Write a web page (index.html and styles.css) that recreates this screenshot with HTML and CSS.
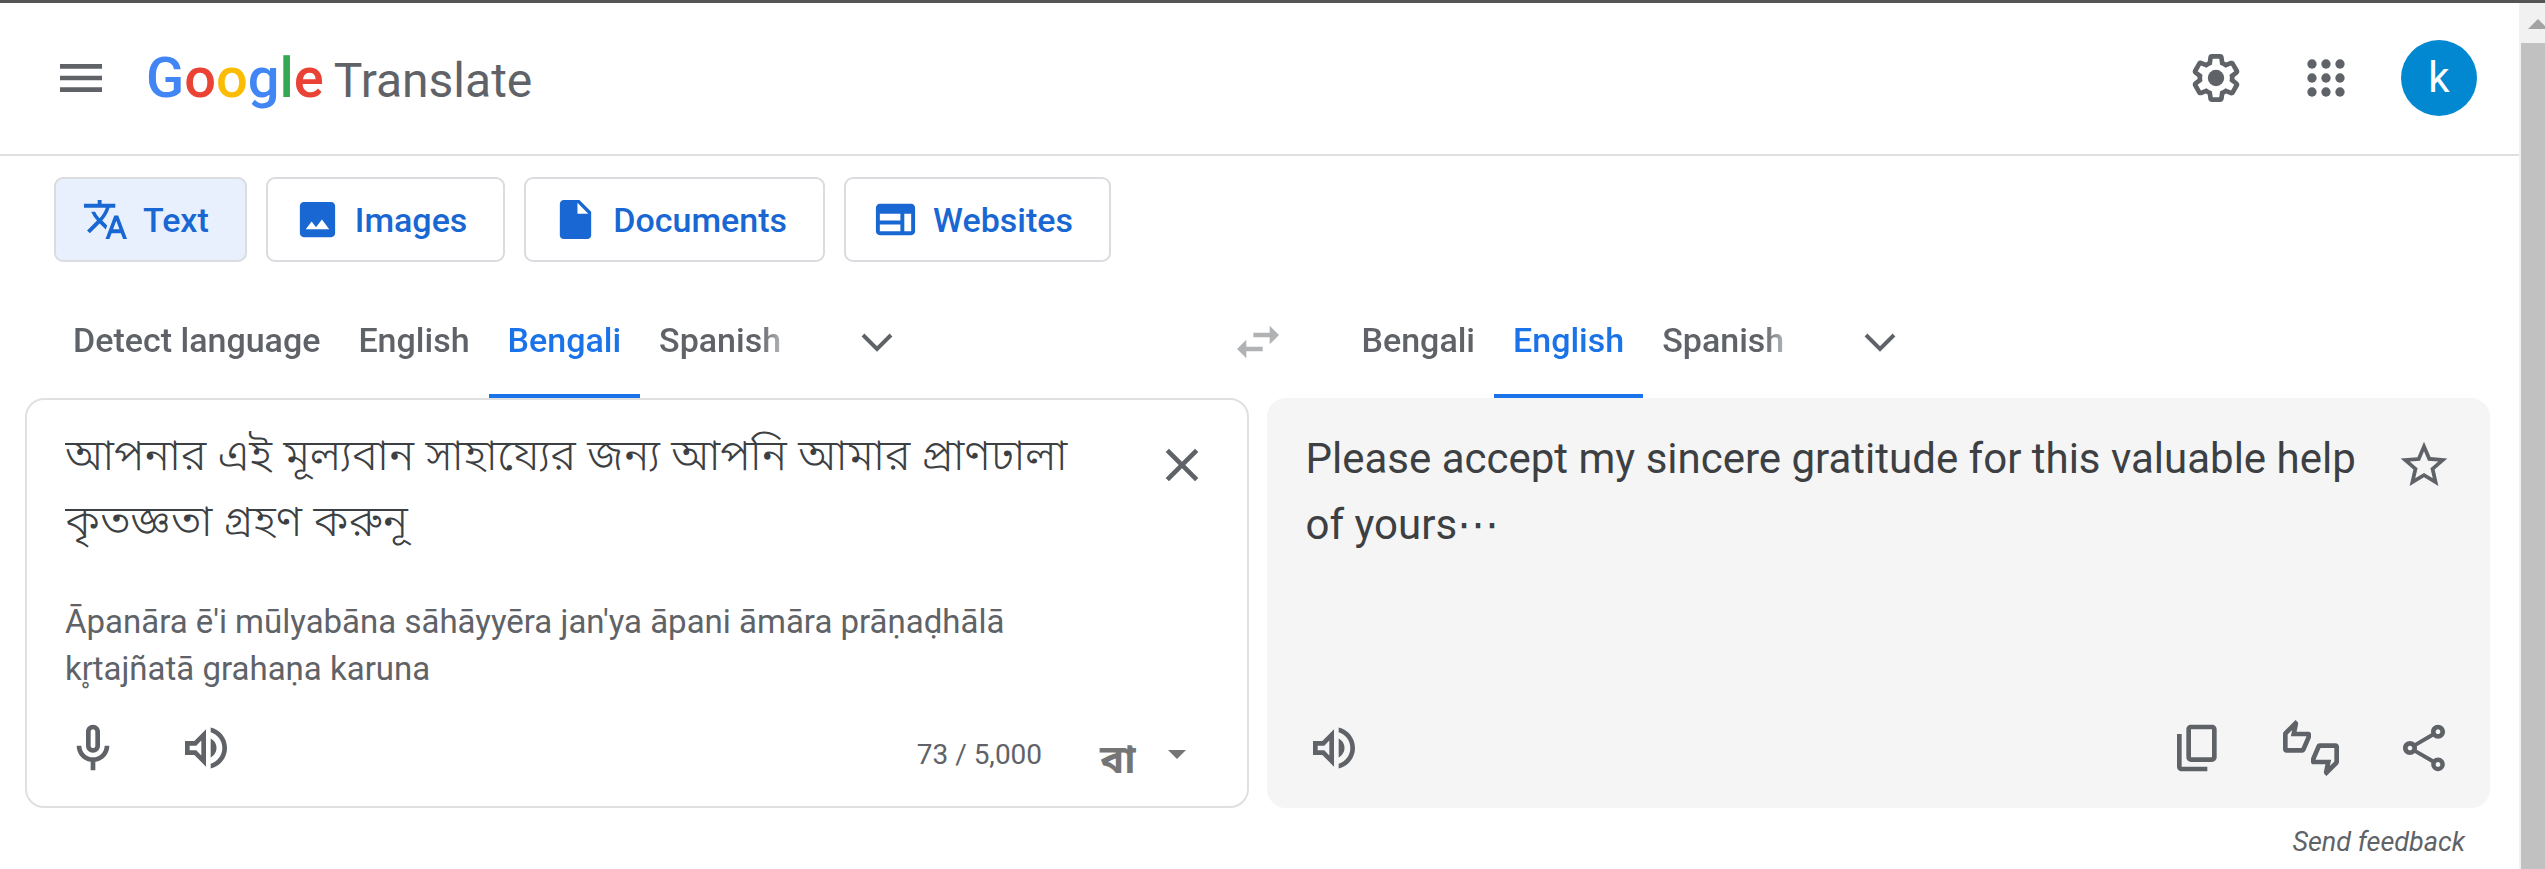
FILE: index.html
```html
<!DOCTYPE html>
<html lang="en">
<head>
  <meta charset="UTF-8">
  <title>Google Translate</title>
  <link rel="stylesheet" href="styles.css">
</head>
<body>
  <div class="page">
    <header class="header">
      <button class="icon-btn" aria-label="Main menu">
        <svg class="icon" viewBox="0 0 24 24"><path d="M3 18h18v-2H3v2zm0-5h18v-2H3v2zm0-7v2h18V6H3z"/></svg>
      </button>
      <a class="logo" href="#">
        <span class="google"><span class="blue">G</span><span class="red">o</span><span class="yellow">o</span><span class="blue">g</span><span class="green">l</span><span class="red">e</span></span>
        <span class="product">Translate</span>
      </a>
      <div class="header-actions">
        <button class="icon-btn" aria-label="Settings">
          <svg class="icon" viewBox="0 0 24 24"><path d="M13.85 22.25h-3.7c-.74 0-1.36-.54-1.45-1.27l-.27-1.89c-.27-.14-.53-.29-.79-.46l-1.8.72c-.7.26-1.47-.03-1.81-.65L2.2 15.53c-.35-.66-.2-1.44.36-1.88l1.53-1.19c-.01-.15-.02-.3-.02-.46 0-.15.01-.31.02-.46l-1.52-1.19c-.59-.45-.74-1.26-.37-1.88l1.85-3.19c.34-.62 1.11-.9 1.79-.63l1.81.73c.26-.17.52-.32.78-.46l.27-1.91c.09-.7.71-1.25 1.44-1.25h3.7c.74 0 1.36.54 1.45 1.27l.27 1.89c.27.14.53.29.79.46l1.8-.72c.71-.26 1.48.03 1.82.65l1.84 3.18c.36.66.2 1.44-.36 1.88l-1.52 1.19c.01.15.02.3.02.46s-.01.31-.02.46l1.52 1.19c.56.45.72 1.23.37 1.86l-1.86 3.22c-.34.62-1.11.9-1.8.63l-1.8-.72c-.26.17-.52.32-.78.46l-.27 1.91c-.1.68-.72 1.22-1.46 1.22zm-3.23-2h2.76l.37-2.55.53-.22c.44-.18.88-.44 1.34-.78l.45-.34 2.38.96 1.38-2.4-2.03-1.58.07-.56c.03-.26.06-.51.06-.78s-.03-.53-.06-.78l-.07-.56 2.03-1.58-1.39-2.4-2.39.96-.45-.35c-.42-.32-.87-.58-1.33-.77l-.52-.22-.37-2.55h-2.76l-.37 2.55-.53.21c-.44.19-.88.44-1.34.79l-.45.33-2.38-.95-1.39 2.39 2.03 1.58-.07.56a7 7 0 0 0-.06.79c0 .26.02.53.06.78l.07.56-2.03 1.58 1.38 2.4 2.39-.96.45.35c.43.33.86.58 1.33.77l.53.22.38 2.55z"/><circle cx="12" cy="12" r="3.5"/></svg>
        </button>
        <button class="icon-btn" aria-label="Google apps">
          <svg class="icon" viewBox="0 0 24 24"><circle cx="6" cy="6" r="2"/><circle cx="12" cy="6" r="2"/><circle cx="18" cy="6" r="2"/><circle cx="6" cy="12" r="2"/><circle cx="12" cy="12" r="2"/><circle cx="18" cy="12" r="2"/><circle cx="6" cy="18" r="2"/><circle cx="12" cy="18" r="2"/><circle cx="18" cy="18" r="2"/></svg>
        </button>
        <button class="avatar" aria-label="Google Account">k</button>
      </div>
    </header>

    <main class="main">
      <nav class="modes">
        <button class="mode active">
          <svg class="mode-icon" viewBox="0 0 24 24"><path d="M12.87 15.07l-2.54-2.51.03-.03c1.74-1.94 2.98-4.17 3.71-6.53H17V4h-7V2H8v2H1v1.99h11.17C11.5 7.92 10.44 9.75 9 11.35 8.07 10.32 7.3 9.19 6.69 8h-2c.73 1.63 1.73 3.17 2.98 4.56l-5.09 5.02L4 19l5-5 3.11 3.11.76-2.04zM18.5 10h-2L12 22h2l1.12-3h4.75L21 22h2l-4.5-12zm-2.62 7l1.62-4.33L19.12 17h-3.24z"/></svg>
          Text
        </button>
        <button class="mode">
          <svg class="mode-icon" viewBox="0 0 24 24"><path fill-rule="evenodd" d="M5 3h14c1.1 0 2 .9 2 2v14c0 1.1-.9 2-2 2H5c-1.1 0-2-.9-2-2V5c0-1.1.9-2 2-2zM6 17h12l-3.75-5-3 4L9 13z"/></svg>
          Images
        </button>
        <button class="mode">
          <svg class="mode-icon" viewBox="0 0 24 24"><path d="M6 2c-1.1 0-1.99.9-1.99 2L4 20c0 1.1.89 2 1.99 2H18c1.1 0 2-.9 2-2V8l-6-6H6zm7 7V3.5L18.5 9H13z"/></svg>
          Documents
        </button>
        <button class="mode">
          <svg class="mode-icon" viewBox="0 0 24 24"><path fill-rule="evenodd" d="M4 4h16c1.1 0 2 .9 2 2v12c0 1.1-.9 2-2 2H4c-1.1 0-2-.9-2-2V6c0-1.1.9-2 2-2zM4 9v3.5h10.5V9zM4 14.5V18h10.5v-3.5zM16.5 9v9H20V9z"/></svg>
          Websites
        </button>
      </nav>

      <div class="languages">
        <div class="language-side">
          <div class="tabs" role="tablist">
            <button class="tab" role="tab">Detect language</button>
            <button class="tab" role="tab">English</button>
            <button class="tab active" role="tab" aria-selected="true">Bengali</button>
            <button class="tab" role="tab">Spanish</button>
          </div>
          <button class="icon-btn" aria-label="More source languages">
            <svg class="icon" viewBox="0 0 24 24"><path class="stroke" d="M6 9l6 6 6-6"/></svg>
          </button>
        </div>
        <button class="icon-btn swap" aria-label="Swap languages">
          <svg class="icon" viewBox="0 0 24 24"><path d="M6.99 11L3 15l3.99 4v-3H14v-2H6.99v-3zM21 9l-3.99-4v3H10v2h7.01v3L21 9z"/></svg>
        </button>
        <div class="language-side">
          <div class="tabs" role="tablist">
            <button class="tab" role="tab">Bengali</button>
            <button class="tab active" role="tab" aria-selected="true">English</button>
            <button class="tab" role="tab">Spanish</button>
          </div>
          <button class="icon-btn" aria-label="More target languages">
            <svg class="icon" viewBox="0 0 24 24"><path class="stroke" d="M6 9l6 6 6-6"/></svg>
          </button>
        </div>
      </div>

      <div class="panels">
        <section class="panel source">
          <div class="panel-body">
            <div class="panel-text">
              <textarea class="source-text" lang="bn" rows="2" aria-label="Source text" spellcheck="false">আপনার এই মূল্যবান সাহায্যের জন্য আপনি আমার প্রাণঢালা কৃতজ্ঞতা গ্রহণ করুনূ</textarea>
              <p class="romanized">Āpanāra ē'i mūlyabāna sāhāyyēra jan'ya āpani āmāra prāṇaḍhālā kr̥tajñatā grahaṇa karuna</p>
            </div>
            <button class="icon-btn" aria-label="Clear source text">
              <svg class="icon" viewBox="0 0 24 24"><path d="M19 6.41L17.59 5 12 10.59 6.41 5 5 6.41 10.59 12 5 17.59 6.41 19 12 13.41 17.59 19 19 17.59 13.41 12z"/></svg>
            </button>
          </div>
          <div class="panel-footer">
            <button class="icon-btn" aria-label="Translate by voice">
              <svg class="icon" viewBox="0 0 24 24"><path d="M12 14c1.66 0 3-1.34 3-3V5c0-1.66-1.34-3-3-3S9 3.34 9 5v6c0 1.66 1.34 3 3 3zm-1-9c0-.55.45-1 1-1s1 .45 1 1v6c0 .55-.45 1-1 1s-1-.45-1-1V5zm6 6c0 2.76-2.24 5-5 5s-5-2.24-5-5H5c0 3.53 2.61 6.43 6 6.92V21.5h2v-3.58c3.39-.49 6-3.39 6-6.92h-2z"/></svg>
            </button>
            <button class="icon-btn" aria-label="Listen to source text">
              <svg class="icon" viewBox="0 0 24 24"><path d="M3 9v6h4l5 5V4L7 9H3zm7-.17v6.34L7.83 13H5v-2h2.83L10 8.83zM16.5 12A4.5 4.5 0 0 0 14 7.97v8.05c1.48-.73 2.5-2.25 2.5-4.02zM14 3.23v2.06c2.89.86 5 3.54 5 6.71s-2.11 5.85-5 6.71v2.06c4.01-.91 7-4.49 7-8.77s-2.99-7.86-7-8.77z"/></svg>
            </button>
            <div class="input-tools">
              <span class="count">73 / 5,000</span>
              <button class="keyboard" lang="bn" aria-label="Turn on input tool">বা</button>
              <button class="caret" aria-label="Select input tool">
                <svg class="caret-icon" viewBox="0 0 18 9"><path d="M0 0h18l-9 9z"/></svg>
              </button>
            </div>
          </div>
        </section>

        <section class="panel target">
          <div class="panel-body">
            <p class="target-text">Please accept my sincere gratitude for this valuable help of yours⋯</p>
            <button class="icon-btn" aria-label="Save translation">
              <svg class="icon" viewBox="0 0 24 24"><path d="M22 9.24l-7.19-.62L12 2 9.19 8.63 2 9.24l5.46 4.73L5.82 21 12 17.27 18.18 21l-1.63-7.03L22 9.24zM12 15.4l-3.76 2.27 1-4.28-3.32-2.88 4.38-.38L12 6.1l1.71 4.04 4.38.38-3.32 2.88 1 4.28L12 15.4z"/></svg>
            </button>
          </div>
          <div class="panel-footer">
            <button class="icon-btn" aria-label="Listen to translation">
              <svg class="icon" viewBox="0 0 24 24"><path d="M3 9v6h4l5 5V4L7 9H3zm7-.17v6.34L7.83 13H5v-2h2.83L10 8.83zM16.5 12A4.5 4.5 0 0 0 14 7.97v8.05c1.48-.73 2.5-2.25 2.5-4.02zM14 3.23v2.06c2.89.86 5 3.54 5 6.71s-2.11 5.85-5 6.71v2.06c4.01-.91 7-4.49 7-8.77s-2.99-7.86-7-8.77z"/></svg>
            </button>
            <div class="share-tools">
              <button class="icon-btn" aria-label="Copy translation">
                <svg class="icon" viewBox="0 0 24 24"><path d="M18 2H9c-1.1 0-2 .9-2 2v12c0 1.1.9 2 2 2h9c1.1 0 2-.9 2-2V4c0-1.1-.9-2-2-2zm0 14H9V4h9v12zM3 6h2v14h11v2H5c-1.1 0-2-.9-2-2z"/></svg>
              </button>
              <button class="icon-btn" aria-label="Rate this translation">
                <svg class="icon" viewBox="0 0 24 24"><path d="M12 6c0-.55-.45-1-1-1H5.82l.66-3.18.02-.23c0-.31-.13-.59-.33-.8L5.38 0 .44 4.94C.17 5.21 0 5.59 0 6v6.5c0 .83.67 1.5 1.5 1.5h6.75c.62 0 1.15-.38 1.38-.91l2.26-5.29c.07-.17.11-.36.11-.55V6zm-2 1.13L7.92 12H2V6.21l1.93-1.93L3.36 7H10v.13zM22.5 10h-6.75c-.62 0-1.15.38-1.38.91l-2.26 5.29c-.07.17-.11.36-.11.55V18c0 .55.45 1 1 1h5.18l-.66 3.18-.02.24c0 .31.13.59.33.8l.79.78 4.94-4.94c.27-.27.44-.65.44-1.06v-6.5c0-.83-.67-1.5-1.5-1.5zm-.5 7.79l-1.93 1.93.57-2.72H14v-.13L16.08 12H22v5.79z"/></svg>
              </button>
              <button class="icon-btn" aria-label="Share translation">
                <svg class="icon" viewBox="0 0 24 24"><path fill-rule="evenodd" d="M18 16.08c-.76 0-1.44.3-1.96.77L8.91 12.7c.05-.23.09-.46.09-.7s-.04-.47-.09-.7l7.05-4.11c.54.5 1.25.81 2.04.81 1.66 0 3-1.34 3-3s-1.34-3-3-3-3 1.34-3 3c0 .24.04.47.09.7L8.04 9.81C7.5 9.31 6.79 9 6 9c-1.66 0-3 1.34-3 3s1.34 3 3 3c.79 0 1.5-.31 2.04-.81l7.12 4.16c-.05.21-.08.43-.08.65 0 1.61 1.31 2.92 2.92 2.92s2.92-1.31 2.92-2.92-1.31-2.92-2.92-2.92zM18 4c.55 0 1 .45 1 1s-.45 1-1 1-1-.45-1-1 .45-1 1-1zM6 13c-.55 0-1-.45-1-1s.45-1 1-1 1 .45 1 1-.45 1-1 1zm12 7.02c-.55 0-1-.45-1-1s.45-1 1-1 1 .45 1 1-.45 1-1 1z"/></svg>
              </button>
            </div>
          </div>
        </section>
      </div>

      <a class="feedback" href="#">Send feedback</a>
    </main>
  </div>

  <div class="scrollbar" aria-hidden="true">
    <svg class="scroll-arrow" viewBox="0 0 26 40"><path d="M19 16l10 10H9z"/></svg>
    <div class="scroll-thumb"></div>
  </div>
</body>
</html>
```
FILE: styles.css
```css
* {
  box-sizing: border-box;
}
body {
  display: flex;
  min-height: 100vh;
  margin: 0;
  border-top: 3px solid #555;
  font-family: Roboto, "Liberation Sans", sans-serif;
  color: #3c4043;
  background-color: #fff;
}
button {
  margin: 0;
  padding: 0;
  border: 0;
  background: none;
  font-family: inherit;
  color: inherit;
  cursor: pointer;
}
a {
  text-decoration: none;
}
p {
  margin: 0;
}
.page {
  flex: 1;
  min-width: 0;
}

/* icons */
.icon-btn {
  display: flex;
  flex: none;
  align-items: center;
  justify-content: center;
  width: 113px;
  height: 112px;
}
.icon {
  width: 56px;
  height: 56px;
  fill: #5f6368;
}
.stroke {
  fill: none;
  stroke: #5f6368;
  stroke-width: 1.7;
}

/* header */
.header {
  display: flex;
  align-items: center;
  height: 153px;
  padding: 0 42px 2px 26px;
  border-bottom: 2px solid #e0e0e0;
}
.logo {
  display: flex;
  align-items: baseline;
  gap: 10px;
  margin-left: 10px;
}
.google {
  font-size: 56px;
  font-weight: 500;
}
.product {
  font-size: 48px;
  color: #5f6368;
}
.blue { color: #4285f4; }
.red { color: #ea4335; }
.yellow { color: #fbbc04; }
.green { color: #34a853; }
.header .icon-btn {
  width: 110px;
}
.header-actions {
  display: flex;
  align-items: center;
  margin-left: auto;
}
.avatar {
  width: 76px;
  height: 76px;
  margin-left: 20px;
  border-radius: 50%;
  background-color: #0288d1;
  color: #fff;
  font-size: 42px;
}

/* text / images / documents / websites */
.main {
  padding: 21px 29px 0 25px;
}
.modes {
  display: flex;
  gap: 19px;
  padding-left: 29px;
}
.mode {
  display: flex;
  align-items: center;
  gap: 14px;
  height: 85px;
  padding: 0 36px 0 26px;
  border: 2px solid #dadce0;
  border-radius: 9px;
  color: #1967d2;
  font-size: 34px;
  font-weight: 500;
}
.mode.active {
  background-color: #e8f0fe;
}
.mode-icon {
  width: 47px;
  height: 47px;
  fill: #1967d2;
}

/* language tabs */
.languages {
  display: grid;
  grid-template-columns: 1fr 112px 1fr;
  margin-top: 24px;
}
.language-side {
  display: flex;
  padding-left: 29px;
}
.tabs {
  display: flex;
  margin-right: 20px;
  -webkit-mask-image: linear-gradient(to left, transparent, #000 40px);
  mask-image: linear-gradient(to left, transparent, #000 40px);
}
.tab {
  height: 112px;
  padding: 0 19px;
  border-bottom: 4px solid transparent;
  color: #5f6368;
  font-size: 34px;
  font-weight: 500;
}
.tab.active {
  border-bottom-color: #1a73e8;
  color: #1a73e8;
}
.swap .icon {
  fill: #b0b2b4;
}

/* panels */
.panels {
  display: grid;
  grid-template-columns: 1fr 1fr;
  gap: 18px;
}
.panel {
  display: flex;
  flex-direction: column;
  padding: 9px 8px 2px 9px;
  border: 2px solid #e0e0e0;
  border-radius: 19px;
}
.target {
  border-color: #f5f5f5;
  background-color: #f5f5f5;
}
.panel-body {
  display: flex;
  flex: 1;
  justify-content: space-between;
}
.panel-text {
  flex: 1;
  padding: 17px 50px 0 29px;
}
.source-text {
  display: block;
  width: 100%;
  height: 132px;
  padding: 0;
  border: 0;
  outline: 0;
  overflow: hidden;
  resize: none;
  background: none;
  color: #3c4043;
  font-family: "Noto Sans Bengali", Roboto, sans-serif;
  font-size: 44px;
  font-weight: 300;
  line-height: 66px;
}
.romanized {
  margin-top: 40px;
  color: #5f6368;
  font-size: 33px;
  line-height: 47px;
}
.target-text {
  padding: 17px 0 0 28px;
  font-family: Roboto, "DejaVu Sans", sans-serif;
  font-size: 42px;
  line-height: 66px;
}
.panel-footer {
  display: flex;
  align-items: center;
}
.input-tools {
  display: flex;
  align-items: center;
  margin-left: auto;
  padding: 12px 53px 0 0;
}
.count {
  color: #5f6368;
  font-size: 28px;
}
.keyboard {
  margin: 0 32px 0 58px;
  padding-top: 16px;
  color: #757575;
  font-family: "Noto Sans Bengali", sans-serif;
  font-size: 40px;
  font-weight: 700;
}
.caret {
  display: flex;
}
.caret-icon {
  width: 18px;
  height: 9px;
  fill: #757575;
}
.share-tools {
  display: flex;
  margin-left: auto;
}
.feedback {
  display: block;
  margin: 18px 25px 0 0;
  color: #5f6368;
  font-size: 27px;
  font-style: italic;
  line-height: 33px;
  text-align: right;
}

/* scrollbar */
.scrollbar {
  display: flex;
  flex: none;
  flex-direction: column;
  width: 26px;
  padding-left: 2px;
  background-color: #f1f1f1;
}
.scroll-arrow {
  width: 26px;
  height: 40px;
  margin-left: -2px;
  fill: #a3a3a3;
}
.scroll-thumb {
  flex: 1;
  background-color: #c1c1c1;
}
```
